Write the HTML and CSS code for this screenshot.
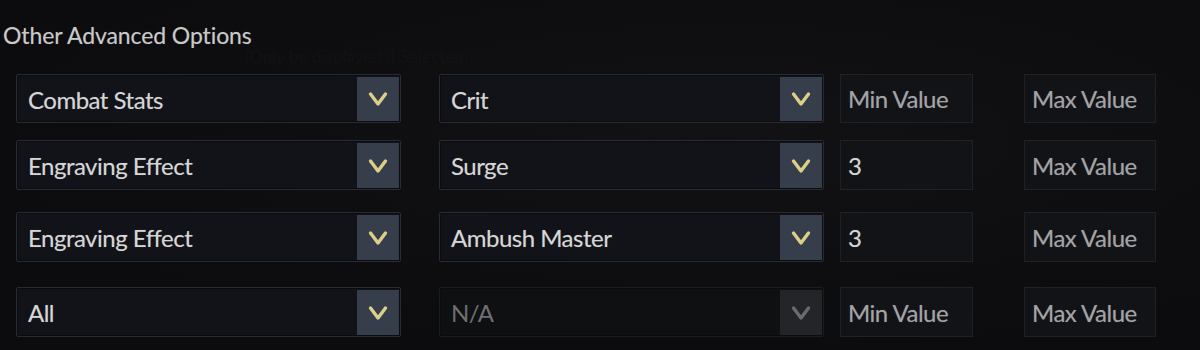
FILE: index.html
```html
<!DOCTYPE html>
<html lang="en">
<head>
<meta charset="utf-8">
<title>Other Advanced Options</title>
<link rel="stylesheet" href="styles.css">
</head>
<body>
<section class="panel">
  <h2 class="title">Other Advanced Options</h2>
  <p class="ghost">(Only be displayed if Selected)</p>
  <div class="rows">
    <div class="row">
      <div class="select"><span class="label">Combat Stats</span><span class="btn"><svg viewBox="0 0 22 22"><path d="M3.5 6 L11 16 L18.5 6"/></svg></span></div>
      <div class="select"><span class="label">Crit</span><span class="btn"><svg viewBox="0 0 22 22"><path d="M3.5 6 L11 16 L18.5 6"/></svg></span></div>
      <div class="input placeholder">Min Value</div>
      <div class="input placeholder">Max Value</div>
    </div>
    <div class="row">
      <div class="select"><span class="label">Engraving Effect</span><span class="btn"><svg viewBox="0 0 22 22"><path d="M3.5 6 L11 16 L18.5 6"/></svg></span></div>
      <div class="select"><span class="label">Surge</span><span class="btn"><svg viewBox="0 0 22 22"><path d="M3.5 6 L11 16 L18.5 6"/></svg></span></div>
      <div class="input">3</div>
      <div class="input placeholder">Max Value</div>
    </div>
    <div class="row">
      <div class="select"><span class="label">Engraving Effect</span><span class="btn"><svg viewBox="0 0 22 22"><path d="M3.5 6 L11 16 L18.5 6"/></svg></span></div>
      <div class="select"><span class="label">Ambush Master</span><span class="btn"><svg viewBox="0 0 22 22"><path d="M3.5 6 L11 16 L18.5 6"/></svg></span></div>
      <div class="input">3</div>
      <div class="input placeholder">Max Value</div>
    </div>
    <div class="row">
      <div class="select"><span class="label">All</span><span class="btn"><svg viewBox="0 0 22 22"><path d="M3.5 6 L11 16 L18.5 6"/></svg></span></div>
      <div class="select disabled"><span class="label">N/A</span><span class="btn"><svg viewBox="0 0 22 22"><path d="M3.5 6 L11 16 L18.5 6"/></svg></span></div>
      <div class="input placeholder">Min Value</div>
      <div class="input placeholder">Max Value</div>
    </div>
  </div>
</section>
</body>
</html>
```

FILE: styles.css
```css
html, body {
  margin: 0;
  padding: 0;
  background: #0d0d0f;
  height: 100%;
}
body {
  font-family: "Lato", "Open Sans", sans-serif;
  color: #d4d4d4;
  overflow: hidden;
}
.panel {
  width: 1200px;
  height: 350px;
  position: relative;
  background: radial-gradient(ellipse at 60% 40%, #121214 0%, #0c0c0e 70%);
}
.title {
  margin: 0;
  padding: 21px 0 0 3px;
  font-size: 23px;
  font-weight: 400;
  line-height: 28px;
  color: #c9c9c9;
  letter-spacing: -0.1px;
  text-shadow: 0 0 1px rgba(200, 200, 200, 0.35);
}
.ghost {
  margin: 0;
  position: absolute;
  left: 245px;
  top: 46px;
  font-size: 17px;
  color: #121214;
}
.rows {
  display: flex;
  flex-direction: column;
  padding: 25px 0 0 16px;
}
.row {
  display: flex;
  height: 49px;
}
.row:nth-child(2) { margin-top: 17px; height: 50px; }
.row:nth-child(3) { margin-top: 22px; height: 50px; }
.row:nth-child(4) { margin-top: 25px; height: 50px; }

.select {
  width: 385px;
  display: flex;
  align-items: stretch;
  background: #111318;
  border: 1px solid #272b33;
  border-radius: 2px;
  box-sizing: border-box;
  padding: 2px 1px 1px 0;
  box-shadow: inset 0 0 0 1px #0b0c0f;
}
.select + .select { margin-left: 38px; }
.label {
  flex: 1;
  display: flex;
  align-items: center;
  padding-left: 11px;
  font-size: 24px;
  letter-spacing: -0.5px;
  color: #d6d6d6;
  text-shadow: 0 0 1px rgba(214, 214, 214, 0.35);
}
.btn {
  width: 42px;
  background: #363e4b;
  display: flex;
  align-items: center;
  justify-content: center;
}
.btn svg {
  width: 22px;
  height: 22px;
}
.btn path {
  fill: none;
  stroke: #dbcf8a;
  stroke-width: 3.4;
  stroke-linecap: round;
  stroke-linejoin: round;
}
.select.disabled {
  background: #0f1012;
  border-color: #1b1c1f;
}
.select.disabled .label { color: #6f6f72; text-shadow: none; }
.select.disabled .btn { background: #242528; }
.select.disabled .btn path { stroke: #6b6b6d; }

.input {
  width: 133px;
  margin-left: 16px;
  background: #121316;
  border: 1px solid #1f2125;
  box-sizing: border-box;
  display: flex;
  align-items: center;
  padding-left: 7px;
  font-size: 24px;
  letter-spacing: -0.5px;
  color: #d6d6d6;
  text-shadow: 0 0 1px rgba(214, 214, 214, 0.3);
}
.input + .input { margin-left: 51px; width: 132px; }
.input.placeholder { color: #a3a3a6; }
```
